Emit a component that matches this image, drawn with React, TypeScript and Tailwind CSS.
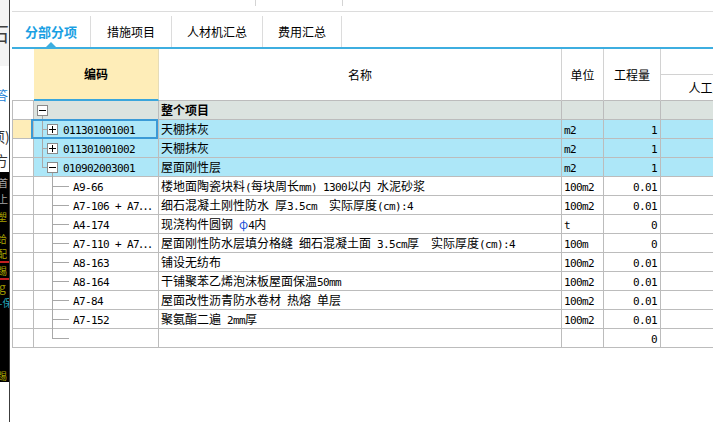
import React, { ReactNode } from "react";

const MONO = "font-['DejaVu_Sans_Mono',monospace] text-[11px] tracking-[-0.62px]";

function Mixed({ text }: { text: string }) {
  const parts = text.match(/[\x20-\x7E]+|[^\x20-\x7E]+/g) ?? [];
  return (
    <>
      {parts.map((p, i) =>
        /^[\x20-\x7E]/.test(p) ? (
          <span key={i} className={MONO}>
            {p}
          </span>
        ) : (
          <span key={i}>{p}</span>
        )
      )}
    </>
  );
}

function Box({ sign }: { sign: "+" | "-" }) {
  return (
    <div className="w-[11px] h-[11px] border border-[#8a8a8a] bg-white">
      <svg width="9" height="9" className="block">
        <path d="M1 4.5h7" stroke="#000" strokeWidth="1" />
        {sign === "+" && <path d="M4.5 1v7" stroke="#000" strokeWidth="1" />}
      </svg>
    </div>
  );
}

type Kind = "total" | "bill" | "item" | "empty";
type Row = {
  kind: Kind;
  code?: string;
  name?: ReactNode;
  unit?: string;
  qty?: string;
  sign?: "+" | "-";
  last?: boolean;
  focus?: boolean;
};

const rows: Row[] = [
  { kind: "total", name: <span className="font-bold">整个项目</span>, sign: "-" },
  { kind: "bill", code: "011301001001", name: "天棚抹灰", unit: "m2", qty: "1", sign: "+", focus: true },
  { kind: "bill", code: "011301001002", name: "天棚抹灰", unit: "m2", qty: "1", sign: "+" },
  { kind: "bill", code: "010902003001", name: "屋面刚性层", unit: "m2", qty: "1", sign: "-", last: true },
  { kind: "item", code: "A9-66", name: <Mixed text="楼地面陶瓷块料(每块周长mm) 1300以内 水泥砂浆" />, unit: "100m2", qty: "0.01" },
  { kind: "item", code: "A7-106 + A7…", name: <Mixed text="细石混凝土刚性防水 厚3.5cm  实际厚度(cm):4" />, unit: "100m2", qty: "0.01" },
  {
    kind: "item",
    code: "A4-174",
    name: (
      <>
        <Mixed text="现浇构件圆钢 " />
        <span className="text-[#1f55d8]">φ</span>
        <Mixed text="4内" />
      </>
    ),
    unit: "t",
    qty: "0",
  },
  { kind: "item", code: "A7-110 + A7…", name: <Mixed text="屋面刚性防水层填分格缝 细石混凝土面 3.5cm厚  实际厚度(cm):4" />, unit: "100m", qty: "0" },
  { kind: "item", code: "A8-163", name: <Mixed text="铺设无纺布" />, unit: "100m2", qty: "0.01" },
  { kind: "item", code: "A8-164", name: <Mixed text="干铺聚苯乙烯泡沫板屋面保温50mm" />, unit: "100m2", qty: "0.01" },
  { kind: "item", code: "A7-84", name: <Mixed text="屋面改性沥青防水卷材 热熔 单层" />, unit: "100m2", qty: "0.01" },
  { kind: "item", code: "A7-152", name: <Mixed text="聚氨酯二遍 2mm厚" />, unit: "100m2", qty: "0.01" },
  { kind: "empty", qty: "0", last: true },
];

function TreeCell({ r }: { r: Row }) {
  const L = "absolute bg-[#a8a8a8]";
  return (
    <div className="relative w-[125px] shrink-0 border-r border-[#bcbcbc] whitespace-pre">
      {r.kind === "total" && (
        <>
          <div className={`${L} left-[8px] top-[15px] -bottom-[1px] w-px`} />
          <div className="absolute left-[3px] top-[4px]">
            <Box sign="-" />
          </div>
        </>
      )}
      {r.kind === "bill" && (
        <>
          <div className={`${L} left-[8px] top-0 w-px ${r.last ? "h-[10px]" : "-bottom-[1px]"}`} />
          <div className={`${L} left-[8px] top-[9px] w-[5px] h-px`} />
          {r.sign === "-" && <div className={`${L} left-[18px] top-[14px] -bottom-[1px] w-px`} />}
          <div className="absolute left-[13px] top-[4px]">
            <Box sign={r.sign ?? "+"} />
          </div>
          <div className="pl-[29px] leading-[18px]">
            <span className={MONO}>{r.code}</span>
          </div>
        </>
      )}
      {(r.kind === "item" || r.kind === "empty") && (
        <>
          <div className={`${L} left-[18px] top-0 w-px ${r.last ? "h-[10px]" : "-bottom-[1px]"}`} />
          <div className={`${L} left-[18px] top-[9px] w-[17px] h-px`} />
          {r.code && (
            <div className="pl-[39px] leading-[18px]">
              <Mixed text={r.code} />
            </div>
          )}
        </>
      )}
      {r.focus && <div className="absolute -left-[3px] -top-[1px] right-0 -bottom-[1px] border-2 border-[#3a9ad6] z-10" />}
    </div>
  );
}

function DataRow({ r }: { r: Row }) {
  const bg = r.kind === "total" ? "bg-[#dbe3df]" : r.kind === "bill" ? "bg-[#ade7f8]" : "bg-white";
  const head = r.focus ? "bg-[#feedb8]" : "bg-white";
  return (
    <div className={`flex h-[19px] border-b border-[#bcbcbc] ${bg}`}>
      <div className={`w-[21px] shrink-0 border-r border-[#bcbcbc] ${head}`} />
      <TreeCell r={r} />
      <div className="w-[403px] shrink-0 border-r border-[#bcbcbc] pl-[2px] leading-[18px] whitespace-pre overflow-hidden">
        {r.name}
      </div>
      <div className="w-[42px] shrink-0 border-r border-[#bcbcbc] pl-[2px] leading-[18px] whitespace-pre overflow-hidden">
        {r.unit && <span className={MONO}>{r.unit}</span>}
      </div>
      <div className="w-[57px] shrink-0 border-r border-[#bcbcbc] pr-[3px] text-right leading-[18px] whitespace-pre">
        {r.qty && <span className={MONO}>{r.qty}</span>}
      </div>
      <div className="w-[90px] shrink-0 border-r border-[#bcbcbc]" />
    </div>
  );
}

function LeftPanel() {
  return (
    <div className="w-[10px] h-[422px] shrink-0 border-r border-[#3c3c3c] flex flex-col overflow-hidden whitespace-nowrap">
      <div className="h-[66px] shrink-0 bg-[#f3f3f3] pt-[22px]">
        <div className="-ml-[11px] text-[20px] leading-[24px] text-[#404040]">石</div>
      </div>
      <div className="h-[106px] shrink-0 bg-white flex flex-col">
        <div className="mt-[22px] -ml-[5px] text-[13px] leading-[14px] text-[#1b7fd6]">答</div>
        <div className="mt-[26px] -ml-[9px] text-[14px] leading-[16px] text-[#333]">项)</div>
        <div className="mt-[8px] -ml-[6px] text-[14px] leading-[16px] text-[#333]">方</div>
      </div>
      <div className="h-[210px] shrink-0 bg-black flex flex-col text-[10px] leading-[11px]">
        <div className="mt-[5px] -ml-[2px] text-[#a8a8a8]">首</div>
        <div className="mt-[5px] -ml-[2px] text-[#a8a8a8]">上</div>
        <div className="mt-[7px] -ml-[3px] text-[#a9a300]">塑</div>
        <div className="mt-[11px] -ml-[3px] text-[#a9a300]">给</div>
        <div className="mt-[4px] -ml-[3px] text-[#a9a300]">配</div>
        <div className="mt-[2px] h-[2px] bg-[#c42020]" />
        <div className="mt-[2px] -ml-[3px] text-[#a9a300]">踢</div>
        <div className="mt-[2px] h-[2px] bg-[#c42020]" />
        <div className="mt-[1px] -ml-[1px] text-[12px] leading-[12px] text-[#9c9600]">g</div>
        <div className="mt-[4px] -ml-[1px] text-[#25a8b8]">-保</div>
        <div className="mt-[62px] -ml-[3px] text-[#a9a300]">踢</div>
      </div>
      <div className="flex-1 bg-white" />
    </div>
  );
}

export default function App() {
  return (
    <div className="w-[713px] h-[422px] overflow-hidden bg-white flex font-['Noto_Sans_CJK_SC',sans-serif] text-[12px] text-black">
      <LeftPanel />
      <div className="ml-[2px] w-[701px] shrink-0 flex flex-col overflow-hidden">
        {/* top strip */}
        <div className="h-[12px] shrink-0 border-b border-[#dcdcdc] flex items-start">
          <div className="w-[243px] shrink-0" />
          <div className="w-px h-[6px] bg-[#d4d4d4]" />
          <div className="w-[86px] shrink-0" />
          <div className="w-px h-[6px] bg-[#d4d4d4]" />
        </div>
        {/* tabs */}
        <div className="h-[35px] shrink-0 flex items-end">
          <div className="relative h-[31px] px-[13px] flex items-center border-r border-[#dcdcdc] font-bold text-[13px] text-[#1a9fe3]">
            分部分项
            <div className="absolute bottom-0 left-1/2 -translate-x-1/2 w-0 h-0 border-x-[5px] border-x-transparent border-b-[5px] border-b-[#3daee0]" />
          </div>
          <div className="h-[31px] px-[16px] flex items-center border-r border-[#dcdcdc]">措施项目</div>
          <div className="h-[31px] px-[15px] flex items-center border-r border-[#dcdcdc]">人材机汇总</div>
          <div className="h-[31px] px-[15px] flex items-center border-r border-[#dcdcdc]">费用汇总</div>
        </div>
        <div className="h-[2px] shrink-0 bg-[#3daee0]" />
        {/* header */}
        <div className="h-[52px] shrink-0 flex">
          <div className="w-[22px] shrink-0 border-b border-[#bcbcbc]" />
          <div className="w-[125px] shrink-0 bg-[#feedb8] border-b-2 border-b-[#3aa6dc] border-r border-r-[#e6dcb8] flex items-center justify-center font-bold">
            编码
          </div>
          <div className="w-[403px] shrink-0 border-r border-b border-[#d2d2d2] border-b-[#bcbcbc] flex items-center justify-center">
            名称
          </div>
          <div className="w-[42px] shrink-0 border-r border-b border-[#d2d2d2] border-b-[#bcbcbc] flex items-center justify-center">
            单位
          </div>
          <div className="w-[57px] shrink-0 border-r border-b border-[#d2d2d2] border-b-[#bcbcbc] flex items-center justify-center">
            工程量
          </div>
          <div className="w-[92px] shrink-0 border-r border-b border-[#d2d2d2] border-b-[#bcbcbc] flex flex-col">
            <div className="h-[26px] shrink-0 border-b border-[#d2d2d2]" />
            <div className="flex-1 flex items-center justify-center">人工费</div>
          </div>
        </div>
        {/* rows */}
        <div className="border-l border-[#bcbcbc] flex flex-col">
          {rows.map((r, i) => (
            <DataRow key={i} r={r} />
          ))}
        </div>
      </div>
    </div>
  );
}
